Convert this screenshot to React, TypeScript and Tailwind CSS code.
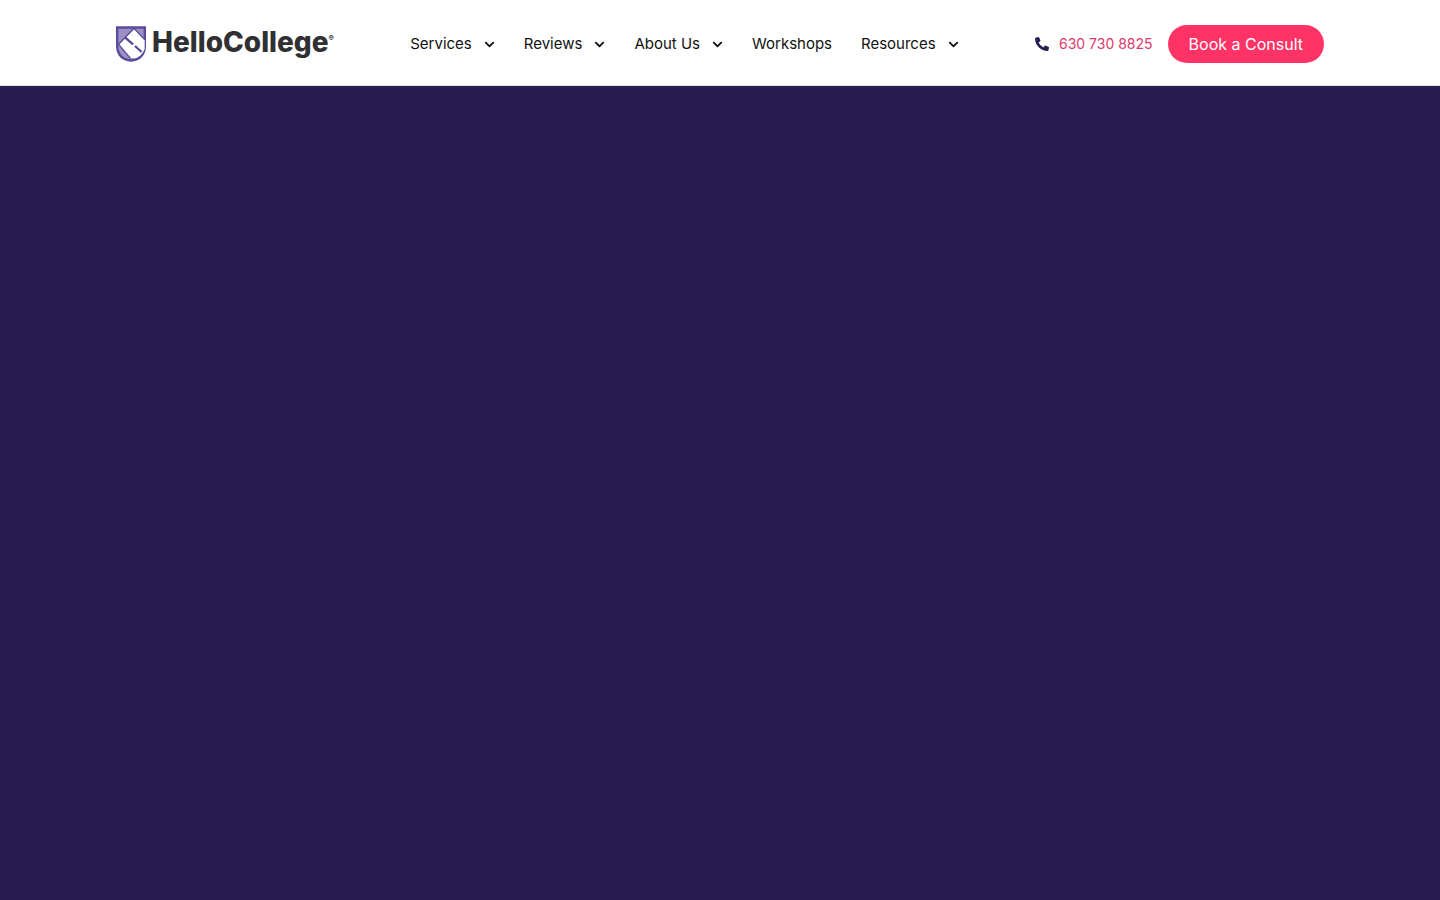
import { FC } from "react";
import { FaChevronDown, FaPhoneAlt } from "react-icons/fa";

interface NavItemProps {
  label: string;
  href: string;
  hasMenu?: boolean;
}

const navItems: NavItemProps[] = [
  { label: "Services", href: "#services", hasMenu: true },
  { label: "Reviews", href: "#reviews", hasMenu: true },
  { label: "About Us", href: "#about", hasMenu: true },
  { label: "Workshops", href: "#workshops" },
  { label: "Resources", href: "#resources", hasMenu: true },
];

const Shield = () => (
  <svg viewBox="0 0 90 106" className="h-9 w-[30px] shrink-0" aria-hidden="true">
    <path d="M0 0H90V60C90 88 70 106 45 106S0 88 0 60Z" fill="#5b4a9c" />
    <path d="M7 7H83V60C83 83 66 99 45 99S7 83 7 60Z" fill="#9b90c6" />
    {/* tilted H */}
    <path d="M54 8 86 42V66C83 80 72 92 57 96L42 95L8 54Z" fill="#fff" />
    <path d="M54 6 8 54 44 97M54 6 86 40" fill="none" stroke="#5b4a9c" strokeWidth="4" />
    <path d="M27 33 51 54M57 59 77 77" fill="none" stroke="#5b4a9c" strokeWidth="7" />
  </svg>
);

const Logo = () => (
  <a href="#home" className="flex items-center gap-[6px] text-[#303033]">
    <Shield />
    <span className="flex items-start pb-1 text-[28px] leading-8 font-extrabold">
      HelloCollege
      <sup className="top-0 pt-2 text-[8px] leading-none">®</sup>
    </span>
  </a>
);

const NavItem: FC<NavItemProps> = ({ label, href, hasMenu }) => (
  <li>
    <a href={href} className="flex items-center gap-3">
      {label}
      {hasMenu && <FaChevronDown size={11} />}
    </a>
  </li>
);

const App = () => {
  return (
    <div className="flex min-h-screen flex-col bg-[#271d50] font-['Inter',sans-serif]">
      <header className="border-b border-[#e4e3ea] bg-white">
        <div className="mx-auto flex max-w-[1208px] items-center justify-between pt-[25px] pb-[22px]">
          <Logo />
          <nav>
            <ul className="flex items-center gap-[29px] text-[15px] leading-5 text-[#111111]">
              {navItems.map((item) => (
                <NavItem key={item.label} {...item} />
              ))}
            </ul>
          </nav>
          <div className="flex items-center gap-[15px]">
            <a href="tel:6307308825" className="flex items-center gap-[10px] text-sm text-[#e0386a]">
              <FaPhoneAlt size={14} className="text-[#271d50]" />
              630 730 8825
            </a>
            <button className="cursor-pointer rounded-full bg-[#ff3366] px-[21px] py-2 text-base leading-[22px] text-white">
              Book a Consult
            </button>
          </div>
        </div>
      </header>
      <main className="flex-1" />
    </div>
  );
};

export default App;
